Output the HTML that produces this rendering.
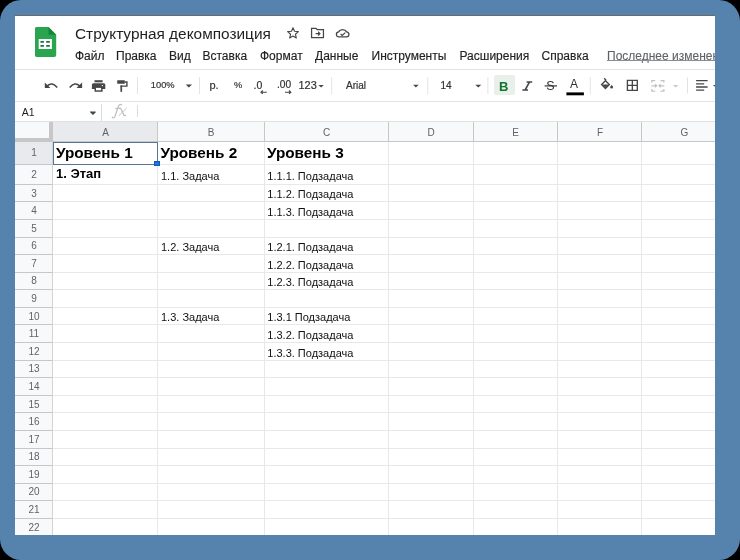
<!DOCTYPE html>
<html><head><meta charset="utf-8">
<style>
html,body{margin:0;padding:0;background:#000;width:740px;height:560px;overflow:hidden}
*{box-sizing:border-box}
.frame{position:absolute;left:0;top:0;width:740px;height:560px;background:#5683ad;border-radius:21px}
.app{position:absolute;left:15px;top:15px;width:700px;height:520px;background:#fff;overflow:hidden}
.in{will-change:transform;position:absolute;left:-15px;top:-15px;width:740px;height:560px;font-family:"Liberation Sans",sans-serif}
.a{position:absolute;white-space:nowrap}
.hl{position:absolute;background:#e1e3e1}
.sep{position:absolute;width:1px;background:#dadce0}
.menu{position:absolute;top:49.3px;font-size:12px;color:#222;-webkit-text-stroke:0.15px #222;line-height:14px}
.tb{position:absolute;color:#333;-webkit-text-stroke:0.2px #333}
.tri{position:absolute;width:0;height:0;border-left:3px solid transparent;border-right:3px solid transparent;border-top:3px solid #444746}
</style></head><body>
<div class="frame"></div>
<div class="app"><div class="in">
  <div class="hl" style="left:15px;top:15px;width:700px;height:1px;background:#6f6a66"></div>
  <!-- logo -->
  <svg class="a" style="left:35px;top:27px" width="22" height="31" viewBox="0 0 22 31">
    <path d="M2 0H13.5L21.2 7.8V28Q21.2 30 19.2 30H2Q-.2 30 -.2 28V2Q-.2 0 2 0Z" fill="#2aa54f"/>
    <path d="M13.5 0L21.2 7.8H13.5Z" fill="#17863b"/>
    <rect x="3.7" y="12" width="13.2" height="10" fill="#fff"/>
    <rect x="5.4" y="13.9" width="3.6" height="1.9" rx="0.5" fill="#1e7040"/>
    <rect x="11.1" y="13.9" width="3.8" height="1.9" rx="0.5" fill="#1e7040"/>
    <rect x="5.4" y="17.9" width="3.6" height="1.9" rx="0.5" fill="#1e7040"/>
    <rect x="11.1" y="17.9" width="3.8" height="1.9" rx="0.5" fill="#1e7040"/>
  </svg>
  <div class="a" style="left:75px;top:24.5px;font-size:15.4px;color:#1f1f1f;line-height:18px">Структурная декомпозиция</div>
  <!-- star, folder, cloud -->
  <svg class="a" style="left:286px;top:26px" width="14" height="14" viewBox="0 0 24 24"><path d="M12 3l2.6 6.1 6.6.6-5 4.4 1.5 6.5L12 17.2 6.3 20.6l1.5-6.5-5-4.4 6.6-.6z" fill="none" stroke="#444746" stroke-width="1.9" stroke-linejoin="round"/></svg>
  <svg class="a" style="left:310px;top:26px" width="15" height="14" viewBox="0 0 24 22"><path d="M2.5 3.5h7l2 2h10v13h-19z" fill="none" stroke="#444746" stroke-width="2"/><path d="M9 12h7M13 9l3 3-3 3" fill="none" stroke="#444746" stroke-width="1.8"/></svg>
  <svg class="a" style="left:330px;top:24px" width="25" height="18" viewBox="330 24 25 18"><path d="M339.3 36.9H346.3A2.5 2.5 0 0 0 346.6 31.9A4.3 3.6 0 0 0 338.6 31.9A2.5 2.5 0 0 0 339.3 36.9Z" fill="none" stroke="#444746" stroke-width="1.3"/><path d="M340.6 34L342.2 35.5 345.3 32.6" fill="none" stroke="#444746" stroke-width="1.2"/></svg>
  <!-- menu -->
  <div class="menu" style="left:75px">Файл</div>
  <div class="menu" style="left:116px">Правка</div>
  <div class="menu" style="left:169px">Вид</div>
  <div class="menu" style="left:202.5px">Вставка</div>
  <div class="menu" style="left:260px">Формат</div>
  <div class="menu" style="left:315px">Данные</div>
  <div class="menu" style="left:371.5px">Инструменты</div>
  <div class="menu" style="left:459.5px">Расширения</div>
  <div class="menu" style="left:541.5px">Справка</div>
  <div class="menu" style="left:607px;color:#5f6368;-webkit-text-stroke:0.1px #5f6368">Последнее изменение</div>
  <div class="hl" style="left:607px;top:60px;width:110px;height:1px;background:#8a8f94"></div>
  <div class="hl" style="left:15px;top:69px;width:700px;height:1px;background:#e3e3e3"></div>
  <!-- toolbar -->
  <svg class="a" style="left:0;top:0" width="740" height="560" viewBox="0 0 740 560">
    <g fill="#444746">
      <path d="M44.8 82.5V88.1H50.4Z"/>
      <path d="M82.1 82.5V88.1H76.5Z"/>
      <rect x="94.5" y="80.2" width="8.1" height="2.1"/>
      <path d="M93.4 83.3H103.8A1.5 1.5 0 0 1 105.3 84.8V89H102.6V91.8H94.5V89H91.9V84.8A1.5 1.5 0 0 1 93.4 83.3Z"/>
      <rect x="117.2" y="80.2" width="7.6" height="3.5" rx="0.5"/>
      <rect x="120.4" y="85.5" width="1.7" height="6.3"/>
    </g>
    <rect x="96" y="87.9" width="5.1" height="2.4" fill="#fff"/>
    <circle cx="102.4" cy="85.6" r="0.7" fill="#fff"/>
    <g fill="none" stroke="#444746">
      <path d="M47.3 85.9Q52.2 81.4 57.2 87.6" stroke-width="1.6"/>
      <path d="M79.6 85.9Q74.7 81.4 69.7 87.6" stroke-width="1.6"/>
      <path d="M124.6 82H126.9V86.1H121.2V87" stroke-width="1.4"/>
      <path d="M526.6 81.9H532.2M522.4 90H528M529.6 81.9L525.1 90" stroke-width="1.55"/>
      <path d="M544.6 85.9H557" stroke-width="1.3"/>
      <path d="M627.4 80.4H637.3V90.3H627.4ZM632.35 80.4V90.3M627.4 85.35H637.3" stroke-width="1.35"/>
      <path d="M696.1 80.6H707.6M696.1 83.8H704.2M696.1 87H707.6M696.1 90.2H704.2" stroke-width="1.3"/>
      <path d="M260.8 92.2H266.8M262.8 90.5L261 92.2 262.8 93.9" stroke-width="1.15"/>
      <path d="M285 92.2H291M289 90.5L290.8 92.2 289 93.9" stroke-width="1.15"/>
    </g>
    <!-- paint bucket -->
    <path d="M605.45 80.7L609.35 84.6 605.45 88.5 601.55 84.6Z" fill="none" stroke="#444746" stroke-width="1.3"/>
    <path d="M601.9 84.6H609L605.45 88.1Z" fill="#444746"/>
    <path d="M604.2 78.3L606.2 80.4" stroke="#444746" stroke-width="1.4"/>
    <path d="M611.6 85Q613.1 86.6 613.1 87.1A1.5 1.5 0 0 1 610.1 87.1Q610.1 86.6 611.6 85Z" fill="#444746"/>
    <!-- merge (disabled) -->
    <g fill="none" stroke="#c2c2c2" stroke-width="1.25">
      <path d="M651.8 82.6V80.7H655.2M651.8 89.1V91H655.2"/>
      <path d="M663.9 82.6V80.7H660.5M663.9 89.1V91H660.5"/>
      <path d="M651.4 85.8H656.6M655 84.2L656.7 85.8 655 87.4"/>
      <path d="M664.3 85.8H659.1M660.7 84.2L659 85.8 660.7 87.4"/>
    </g>
    <g fill="#444746">
      <path d="M185.7 84.6H192L188.85 87.6Z"/>
      <path d="M318.4 84.9H323.8L321.1 87.5Z"/>
      <path d="M413.1 84.8H418.7L415.9 87.5Z"/>
      <path d="M475.3 84.8H481.3L478.3 87.5Z"/>
      <path d="M712.8 84.9H718.8L715.8 87.6Z"/>
      <path d="M89.7 111.6H95.9L92.8 114.5Z"/>
    </g>
    <path d="M672.9 84.9H678.4L675.65 87.5Z" fill="#c8c8c8"/>
    <g fill="#e3e3e3">
      <rect x="137" y="77" width="1" height="17"/>
      <rect x="199" y="77" width="1" height="17"/>
      <rect x="331.2" y="77" width="1" height="17"/>
      <rect x="427.3" y="77" width="1" height="17"/>
      <rect x="487.4" y="77" width="1" height="17"/>
      <rect x="589.8" y="77" width="1" height="17"/>
      <rect x="687" y="77.5" width="1" height="16"/>
    </g>
    <rect x="566.4" y="92.4" width="17.5" height="2.9" fill="#000"/>
    <rect x="494" y="75" width="21" height="20" rx="2" fill="#e8f0e9"/>
  </svg>
  <div class="tb" style="left:150.8px;top:79.5px;font-size:9.3px;line-height:10px">100%</div>
  <div class="tb" style="left:209.5px;top:79px;font-size:11px;line-height:12px">р.</div>
  <div class="tb" style="left:234px;top:80.3px;font-size:9.3px;line-height:10px">%</div>
  <div class="tb" style="left:253.5px;top:79px;font-size:10.5px;line-height:12px">.0</div>
  <div class="tb" style="left:277px;top:79px;font-size:10.2px;line-height:12px">.00</div>
  <div class="tb" style="left:298.5px;top:79px;font-size:11px;line-height:12px">123</div>
  <div class="tb" style="left:346px;top:80px;font-size:10px;line-height:12px">Arial</div>
  <div class="tb" style="left:440.5px;top:80px;font-size:10px;line-height:12px">14</div>
  <div class="a" style="left:499px;top:79.6px;font-size:13px;font-weight:bold;color:#137333;line-height:14px">B</div>
  <div class="a" style="left:546.3px;top:79.3px;font-size:12.5px;color:#333;line-height:14px">S</div>
  <div class="a" style="left:570px;top:77px;font-size:12px;color:#333;line-height:14px">A</div>
  <div class="hl" style="left:15px;top:101px;width:700px;height:1.3px;background:#e3e3e3"></div>
  <!-- formula bar -->
  <div class="a" style="left:21.8px;top:106.3px;font-size:10.5px;color:#1f1f1f;line-height:12px">A1</div>
  <div class="tri" style="left:90px;top:111.5px"></div>
  <div class="sep" style="left:101px;top:104px;height:17px"></div>
  <svg class="a" style="left:105px;top:100px" width="30" height="22" viewBox="105 100 30 22"><g fill="none" stroke="#bdbdbd" stroke-linecap="round"><path d="M112.2 117.2Q113.6 119 115 116.3L118.2 106.8Q119.3 103.6 121.6 104.8" stroke-width="1.2"/><path d="M115.4 108.4H120.2" stroke-width="1"/><path d="M119.2 108.3Q120.6 107.9 121.3 109.6L123.6 114.6Q124.3 116 125.6 115.4" stroke-width="1.25"/><path d="M126.3 108.4L119 115.6" stroke-width="0.9"/></g></svg>
  <div class="sep" style="left:137px;top:105px;height:12px"></div>
  <div class="hl" style="left:15px;top:121px;width:700px;height:1.8px;background:#e0e0e0"></div>
  <!--GRID-->
  <div class="hl" style="left:15px;top:122px;width:700px;height:19px;background:#f8f9fa"></div>
  <div class="hl" style="left:53px;top:122px;width:104.5px;height:19px;background:#e8eaed"></div>
  <div class="hl" style="left:15px;top:141px;width:38px;height:400px;background:#f8f9fa"></div>
  <div class="hl" style="left:15px;top:141px;width:38px;height:23px;background:#e8eaed"></div>
  <div class="hl" style="left:157.00px;top:122px;width:1px;height:19px;background:#c7c7c7"></div>
  <div class="hl" style="left:263.50px;top:122px;width:1px;height:19px;background:#c7c7c7"></div>
  <div class="hl" style="left:388.10px;top:122px;width:1px;height:19px;background:#c7c7c7"></div>
  <div class="hl" style="left:472.60px;top:122px;width:1px;height:19px;background:#c7c7c7"></div>
  <div class="hl" style="left:557.00px;top:122px;width:1px;height:19px;background:#c7c7c7"></div>
  <div class="hl" style="left:641.30px;top:122px;width:1px;height:19px;background:#c7c7c7"></div>
  <div class="hl" style="left:725.80px;top:122px;width:1px;height:19px;background:#c7c7c7"></div>
  <div class="hl" style="left:157.00px;top:141px;width:1px;height:400px;background:#e8e8e8"></div>
  <div class="hl" style="left:263.50px;top:141px;width:1px;height:400px;background:#e8e8e8"></div>
  <div class="hl" style="left:388.10px;top:141px;width:1px;height:400px;background:#e8e8e8"></div>
  <div class="hl" style="left:472.60px;top:141px;width:1px;height:400px;background:#e8e8e8"></div>
  <div class="hl" style="left:557.00px;top:141px;width:1px;height:400px;background:#e8e8e8"></div>
  <div class="hl" style="left:641.30px;top:141px;width:1px;height:400px;background:#e8e8e8"></div>
  <div class="hl" style="left:725.80px;top:141px;width:1px;height:400px;background:#e8e8e8"></div>
  <div class="hl" style="left:53px;top:163.50px;width:670px;height:1px;background:#e8e8e8"></div>
  <div class="hl" style="left:15px;top:163.50px;width:38px;height:1px;background:#c7c7c7"></div>
  <div class="hl" style="left:53px;top:183.80px;width:670px;height:1px;background:#e8e8e8"></div>
  <div class="hl" style="left:15px;top:183.80px;width:38px;height:1px;background:#c7c7c7"></div>
  <div class="hl" style="left:53px;top:201.38px;width:670px;height:1px;background:#e8e8e8"></div>
  <div class="hl" style="left:15px;top:201.38px;width:38px;height:1px;background:#c7c7c7"></div>
  <div class="hl" style="left:53px;top:218.96px;width:670px;height:1px;background:#e8e8e8"></div>
  <div class="hl" style="left:15px;top:218.96px;width:38px;height:1px;background:#c7c7c7"></div>
  <div class="hl" style="left:53px;top:236.54px;width:670px;height:1px;background:#e8e8e8"></div>
  <div class="hl" style="left:15px;top:236.54px;width:38px;height:1px;background:#c7c7c7"></div>
  <div class="hl" style="left:53px;top:254.12px;width:670px;height:1px;background:#e8e8e8"></div>
  <div class="hl" style="left:15px;top:254.12px;width:38px;height:1px;background:#c7c7c7"></div>
  <div class="hl" style="left:53px;top:271.70px;width:670px;height:1px;background:#e8e8e8"></div>
  <div class="hl" style="left:15px;top:271.70px;width:38px;height:1px;background:#c7c7c7"></div>
  <div class="hl" style="left:53px;top:289.28px;width:670px;height:1px;background:#e8e8e8"></div>
  <div class="hl" style="left:15px;top:289.28px;width:38px;height:1px;background:#c7c7c7"></div>
  <div class="hl" style="left:53px;top:306.86px;width:670px;height:1px;background:#e8e8e8"></div>
  <div class="hl" style="left:15px;top:306.86px;width:38px;height:1px;background:#c7c7c7"></div>
  <div class="hl" style="left:53px;top:324.44px;width:670px;height:1px;background:#e8e8e8"></div>
  <div class="hl" style="left:15px;top:324.44px;width:38px;height:1px;background:#c7c7c7"></div>
  <div class="hl" style="left:53px;top:342.02px;width:670px;height:1px;background:#e8e8e8"></div>
  <div class="hl" style="left:15px;top:342.02px;width:38px;height:1px;background:#c7c7c7"></div>
  <div class="hl" style="left:53px;top:359.60px;width:670px;height:1px;background:#e8e8e8"></div>
  <div class="hl" style="left:15px;top:359.60px;width:38px;height:1px;background:#c7c7c7"></div>
  <div class="hl" style="left:53px;top:377.18px;width:670px;height:1px;background:#e8e8e8"></div>
  <div class="hl" style="left:15px;top:377.18px;width:38px;height:1px;background:#c7c7c7"></div>
  <div class="hl" style="left:53px;top:394.76px;width:670px;height:1px;background:#e8e8e8"></div>
  <div class="hl" style="left:15px;top:394.76px;width:38px;height:1px;background:#c7c7c7"></div>
  <div class="hl" style="left:53px;top:412.34px;width:670px;height:1px;background:#e8e8e8"></div>
  <div class="hl" style="left:15px;top:412.34px;width:38px;height:1px;background:#c7c7c7"></div>
  <div class="hl" style="left:53px;top:429.92px;width:670px;height:1px;background:#e8e8e8"></div>
  <div class="hl" style="left:15px;top:429.92px;width:38px;height:1px;background:#c7c7c7"></div>
  <div class="hl" style="left:53px;top:447.50px;width:670px;height:1px;background:#e8e8e8"></div>
  <div class="hl" style="left:15px;top:447.50px;width:38px;height:1px;background:#c7c7c7"></div>
  <div class="hl" style="left:53px;top:465.08px;width:670px;height:1px;background:#e8e8e8"></div>
  <div class="hl" style="left:15px;top:465.08px;width:38px;height:1px;background:#c7c7c7"></div>
  <div class="hl" style="left:53px;top:482.66px;width:670px;height:1px;background:#e8e8e8"></div>
  <div class="hl" style="left:15px;top:482.66px;width:38px;height:1px;background:#c7c7c7"></div>
  <div class="hl" style="left:53px;top:500.24px;width:670px;height:1px;background:#e8e8e8"></div>
  <div class="hl" style="left:15px;top:500.24px;width:38px;height:1px;background:#c7c7c7"></div>
  <div class="hl" style="left:53px;top:517.82px;width:670px;height:1px;background:#e8e8e8"></div>
  <div class="hl" style="left:15px;top:517.82px;width:38px;height:1px;background:#c7c7c7"></div>
  <div class="hl" style="left:53px;top:535.40px;width:670px;height:1px;background:#e8e8e8"></div>
  <div class="hl" style="left:15px;top:535.40px;width:38px;height:1px;background:#c7c7c7"></div>
  <div class="hl" style="left:53px;top:552.98px;width:670px;height:1px;background:#e8e8e8"></div>
  <div class="hl" style="left:15px;top:552.98px;width:38px;height:1px;background:#c7c7c7"></div>
  <div class="hl" style="left:15px;top:141px;width:700px;height:1px;background:#c7c7c7"></div>
  <div class="hl" style="left:52.2px;top:141px;width:1px;height:400px;background:#d3d3d3"></div>
  <div class="hl" style="left:15px;top:137.5px;width:38px;height:3.5px;background:#c7c7c7"></div>
  <div class="hl" style="left:49.3px;top:122px;width:3.7px;height:19px;background:#c7c7c7"></div>
  <div class="a" style="left:85.55px;top:126.6px;width:40px;text-align:center;font-size:10px;line-height:12px;color:#5f6368">A</div>
  <div class="a" style="left:191.05px;top:126.6px;width:40px;text-align:center;font-size:10px;line-height:12px;color:#5f6368">B</div>
  <div class="a" style="left:306.60px;top:126.6px;width:40px;text-align:center;font-size:10px;line-height:12px;color:#5f6368">C</div>
  <div class="a" style="left:411.15px;top:126.6px;width:40px;text-align:center;font-size:10px;line-height:12px;color:#5f6368">D</div>
  <div class="a" style="left:495.60px;top:126.6px;width:40px;text-align:center;font-size:10px;line-height:12px;color:#5f6368">E</div>
  <div class="a" style="left:579.95px;top:126.6px;width:40px;text-align:center;font-size:10px;line-height:12px;color:#5f6368">F</div>
  <div class="a" style="left:664.35px;top:126.6px;width:40px;text-align:center;font-size:10px;line-height:12px;color:#5f6368">G</div>
  <div class="a" style="left:15px;top:147.00px;width:38px;text-align:center;font-size:10px;line-height:12px;color:#5f6368">1</div>
  <div class="a" style="left:15px;top:168.65px;width:38px;text-align:center;font-size:10px;line-height:12px;color:#5f6368">2</div>
  <div class="a" style="left:15px;top:187.59px;width:38px;text-align:center;font-size:10px;line-height:12px;color:#5f6368">3</div>
  <div class="a" style="left:15px;top:205.17px;width:38px;text-align:center;font-size:10px;line-height:12px;color:#5f6368">4</div>
  <div class="a" style="left:15px;top:222.75px;width:38px;text-align:center;font-size:10px;line-height:12px;color:#5f6368">5</div>
  <div class="a" style="left:15px;top:240.33px;width:38px;text-align:center;font-size:10px;line-height:12px;color:#5f6368">6</div>
  <div class="a" style="left:15px;top:257.91px;width:38px;text-align:center;font-size:10px;line-height:12px;color:#5f6368">7</div>
  <div class="a" style="left:15px;top:275.49px;width:38px;text-align:center;font-size:10px;line-height:12px;color:#5f6368">8</div>
  <div class="a" style="left:15px;top:293.07px;width:38px;text-align:center;font-size:10px;line-height:12px;color:#5f6368">9</div>
  <div class="a" style="left:15px;top:310.65px;width:38px;text-align:center;font-size:10px;line-height:12px;color:#5f6368">10</div>
  <div class="a" style="left:15px;top:328.23px;width:38px;text-align:center;font-size:10px;line-height:12px;color:#5f6368">11</div>
  <div class="a" style="left:15px;top:345.81px;width:38px;text-align:center;font-size:10px;line-height:12px;color:#5f6368">12</div>
  <div class="a" style="left:15px;top:363.39px;width:38px;text-align:center;font-size:10px;line-height:12px;color:#5f6368">13</div>
  <div class="a" style="left:15px;top:380.97px;width:38px;text-align:center;font-size:10px;line-height:12px;color:#5f6368">14</div>
  <div class="a" style="left:15px;top:398.55px;width:38px;text-align:center;font-size:10px;line-height:12px;color:#5f6368">15</div>
  <div class="a" style="left:15px;top:416.13px;width:38px;text-align:center;font-size:10px;line-height:12px;color:#5f6368">16</div>
  <div class="a" style="left:15px;top:433.71px;width:38px;text-align:center;font-size:10px;line-height:12px;color:#5f6368">17</div>
  <div class="a" style="left:15px;top:451.29px;width:38px;text-align:center;font-size:10px;line-height:12px;color:#5f6368">18</div>
  <div class="a" style="left:15px;top:468.87px;width:38px;text-align:center;font-size:10px;line-height:12px;color:#5f6368">19</div>
  <div class="a" style="left:15px;top:486.45px;width:38px;text-align:center;font-size:10px;line-height:12px;color:#5f6368">20</div>
  <div class="a" style="left:15px;top:504.03px;width:38px;text-align:center;font-size:10px;line-height:12px;color:#5f6368">21</div>
  <div class="a" style="left:15px;top:521.61px;width:38px;text-align:center;font-size:10px;line-height:12px;color:#5f6368">22</div>
  <div class="a" style="left:56.00px;top:145.40px;font-size:15.3px;font-weight:bold;color:#000;line-height:16px">Уровень 1</div>
  <div class="a" style="left:160.50px;top:145.40px;font-size:15.3px;font-weight:bold;color:#000;line-height:16px">Уровень 2</div>
  <div class="a" style="left:267.00px;top:145.40px;font-size:15.3px;font-weight:bold;color:#000;line-height:16px">Уровень 3</div>
  <div class="a" style="left:56.00px;top:166.10px;font-size:13px;font-weight:bold;color:#000;line-height:16px">1. Этап</div>
  <div class="a" style="left:161.00px;top:167.99px;font-size:11px;font-weight:normal;color:#111;line-height:16px">1.1. Задача</div>
  <div class="a" style="left:267.30px;top:167.99px;font-size:11px;font-weight:normal;color:#111;line-height:16px">1.1.1. Подзадача</div>
  <div class="a" style="left:267.30px;top:186.37px;font-size:11px;font-weight:normal;color:#111;line-height:16px">1.1.2. Подзадача</div>
  <div class="a" style="left:267.30px;top:203.95px;font-size:11px;font-weight:normal;color:#111;line-height:16px">1.1.3. Подзадача</div>
  <div class="a" style="left:161.00px;top:239.11px;font-size:11px;font-weight:normal;color:#111;line-height:16px">1.2. Задача</div>
  <div class="a" style="left:267.30px;top:239.11px;font-size:11px;font-weight:normal;color:#111;line-height:16px">1.2.1. Подзадача</div>
  <div class="a" style="left:267.30px;top:256.69px;font-size:11px;font-weight:normal;color:#111;line-height:16px">1.2.2. Подзадача</div>
  <div class="a" style="left:267.30px;top:274.27px;font-size:11px;font-weight:normal;color:#111;line-height:16px">1.2.3. Подзадача</div>
  <div class="a" style="left:161.00px;top:309.43px;font-size:11px;font-weight:normal;color:#111;line-height:16px">1.3. Задача</div>
  <div class="a" style="left:267.30px;top:309.43px;font-size:11px;font-weight:normal;color:#111;line-height:16px">1.3.1 Подзадача</div>
  <div class="a" style="left:267.30px;top:327.01px;font-size:11px;font-weight:normal;color:#111;line-height:16px">1.3.2. Подзадача</div>
  <div class="a" style="left:267.30px;top:344.59px;font-size:11px;font-weight:normal;color:#111;line-height:16px">1.3.3. Подзадача</div>
  <div class="a" style="left:53.3px;top:142.3px;width:104.7px;height:22.3px;border:1.6px solid #587694"></div>
  <div class="a" style="left:154.3px;top:160.9px;width:5.6px;height:5.6px;background:#1a73e8;border:0.6px solid #1558b0"></div>
  <!--/GRID-->
</div></div>
</body></html>
